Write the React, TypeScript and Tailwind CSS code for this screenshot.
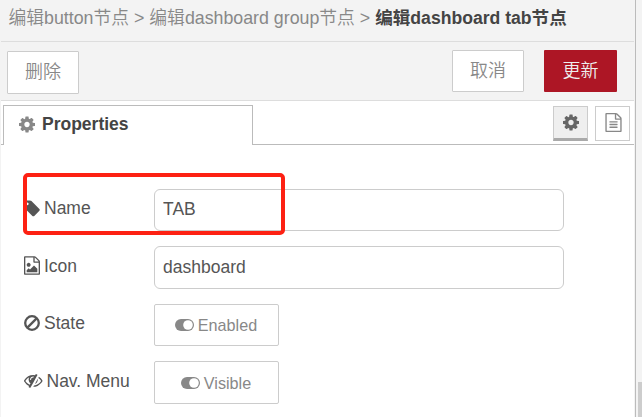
import type { ReactNode } from "react";

const paths = {
  cog: "M1152 896q0-106-75-181t-181-75-181 75-75 181 75 181 181 75 181-75 75-181zm512-109v222q0 12-8 23t-20 13l-185 28q-19 54-39 91 35 50 107 138 10 12 10 25t-9 23q-27 37-99 108t-94 71q-12 0-26-9l-138-108q-44 23-91 38-16 136-29 186-7 28-36 28h-222q-14 0-24.5-8.5t-11.5-21.5l-28-184q-49-16-90-37l-141 107q-10 9-25 9-14 0-25-11-126-114-165-168-7-10-7-23 0-12 8-23 15-21 51-66.5t54-70.5q-27-50-41-99l-183-27q-13-2-21-12.5t-8-23.5v-222q0-12 8-23t19-13l186-28q14-46 39-92-40-57-107-138-10-12-10-24 0-10 9-23 26-36 98.5-107.5t94.5-71.5q13 0 26 10l138 107q44-23 91-38 16-136 29-186 7-28 36-28h222q14 0 24.5 8.5t11.5 21.5l28 184q49 16 90 37l142-107q9-9 24-9 13 0 25 10 129 119 165 170 7 8 7 22 0 12-8 23-15 21-51 66.5t-54 70.5q26 50 41 98l183 28q13 2 21 12.5t8 23.5z",
  tag: "M576 448q0-53-37.5-90.5t-90.5-37.5-90.5 37.5-37.5 90.5 37.5 90.5 90.5 37.5 90.5-37.5 37.5-90.5zm1067 576q0 53-37 90l-491 492q-39 37-91 37-53 0-90-37l-715-716q-38-37-64.5-101t-26.5-117v-416q0-52 38-90t90-38h416q53 0 117 26.5t102 64.5l715 714q37 39 37 91z",
  fileText:
    "M1596 380q28 28 48 76t20 88v1152q0 40-28 68t-68 28h-1344q-40 0-68-28t-28-68v-1600q0-40 28-68t68-28h896q40 0 88 20t76 48zm-444-244v376h376q-10-29-22-41l-313-313q-12-12-41-22zm384 1528v-1024h-416q-40 0-68-28t-28-68v-416h-768v1536h1280zm-1024-864q0-14 9-23t23-9h704q14 0 23 9t9 23v64q0 14-9 23t-23 9h-704q-14 0-23-9t-9-23v-64zm736 224q14 0 23 9t9 23v64q0 14-9 23t-23 9h-704q-14 0-23-9t-9-23v-64q0-14 9-23t23-9h704zm0 256q14 0 23 9t9 23v64q0 14-9 23t-23 9h-704q-14 0-23-9t-9-23v-64q0-14 9-23t23-9h704z",
  fileImage:
    "M1596 380q28 28 48 76t20 88v1152q0 40-28 68t-68 28h-1344q-40 0-68-28t-28-68v-1600q0-40 28-68t68-28h896q40 0 88 20t76 48zm-444-244v376h376q-10-29-22-41l-313-313q-12-12-41-22zm384 1528v-1024h-416q-40 0-68-28t-28-68v-416h-768v1536h1280zm-128-448v320h-1024v-192l192-192 128 128 384-384zm-832-192q-80 0-136-56t-56-136 56-136 136-56 136 56 56 136-56 136-136 56z",
  eyeSlash:
    "M555 1335l78-141q-87-63-136-159t-49-203q0-121 61-225-229 117-381 353 167 258 427 375zm389-759q0-20-14-34t-34-14q-125 0-214.5 89.5t-89.5 214.5q0 20 14 34t34 14 34-14 14-34q0-86 61-147t147-61q20 0 34-14t14-34zm363-191q0 7-1 9-106 189-316 567t-315 566l-49 89q-10 16-28 16-12 0-134-70-16-10-16-28 0-12 44-87-143-65-263.5-173t-208.5-245q-20-31-20-69t20-69q153-235 380-371t496-136q89 0 180 17l54-97q10-16 28-16 5 0 18 6t31 15.5 33 18.5 31.5 18.5 19.5 11.5q16 10 16 27zm37 447q0 139-79 253.5t-209 164.5l280-502q8 45 8 84zm448 128q0 35-20 69-39 64-109 145-150 172-347.5 267t-419.5 95l74-132q212-18 392.5-137t301.5-307q-115-179-282-294l63-112q95 64 182.5 153t144.5 184q20 34 20 69z",
};

function Icon({ d, viewBox = "128 0 1536 1792", className }: { d: string; viewBox?: string; className: string }) {
  return (
    <svg viewBox={viewBox} className={`shrink-0 ${className}`} fill="currentColor">
      <path d={d} />
    </svg>
  );
}

function Ban() {
  return (
    <svg viewBox="0 0 16 16" className="size-4" fill="none" stroke="currentColor" strokeWidth="2.3">
      <circle cx="8" cy="8" r="6.8" />
      <path d="M3.4 12.6 12.6 3.4" />
    </svg>
  );
}

function Toggle() {
  return (
    <svg viewBox="0 0 19 12" className="h-3 w-[19px]">
      <rect width="19" height="12" rx="6" fill="currentColor" />
      <circle cx="13" cy="6" r="4.8" fill="white" />
    </svg>
  );
}

function Row({ icon, label, className, labelClass, children }: { icon: ReactNode; label: string; className: string; labelClass: string; children: ReactNode }) {
  return (
    <div className={`flex ${className}`}>
      <div className={`flex w-[130px] shrink-0 items-center gap-1 text-[#555] ${labelClass}`}>
        {icon}
        <span>{label}</span>
      </div>
      {children}
    </div>
  );
}

const field = "w-[410px] rounded-[6px] border border-[#ccc] bg-white px-2 pb-px text-[#555] outline-none";
const toggle = "flex w-[125px] items-center justify-center gap-1 rounded-[2px] border border-[#ccc] bg-white pr-px text-[16.2px] text-[#888]";

export default function App() {
  return (
    <div className="relative flex h-[417px] w-[642px] overflow-hidden bg-white font-['Liberation_Sans','Noto_Sans_CJK_SC',sans-serif] text-[17.5px] leading-6">
      <main className="flex w-[634px] shrink-0 flex-col border-l border-[#f3f3f3]">
        <header className="flex h-[42px] shrink-0 items-center border-b border-[#ddd] bg-[#f3f3f3] pb-[5px] pl-[7.5px] whitespace-pre text-[#888]">
          <span className="text-[17.8px] font-[350]">编辑button节点 &gt; 编辑dashboard group节点 &gt; </span>
          <span className="text-[17.6px] font-bold text-[#444]">编辑dashboard tab节点</span>
        </header>
        <div className="flex h-[59px] shrink-0 items-start border-b border-[#ddd] bg-[#f3f3f3] pt-2 pr-[17px] pl-1.5 text-[18px] font-[350]">
          <button className="mt-px h-[43px] w-[72px] rounded-[1px] border border-[#ccc] bg-white pb-px text-[#888]">删除</button>
          <button className="ml-auto h-[42px] w-[72px] rounded-[1px] border border-[#ccc] bg-white pb-px text-[#888]">取消</button>
          <button className="ml-5 h-[42px] w-[73px] rounded-[1px] bg-[#ad1625] pb-px text-[#eee]">更新</button>
        </div>
        <div className="flex h-11 shrink-0 items-end">
          <div className="h-px w-0.5 bg-[#bbb]" />
          <div className="flex h-10 w-[250px] items-center gap-[7px] border-x border-t border-[#bbb] pb-[3px] pl-[15px] font-bold text-[#444]">
            <Icon d={paths.cog} className="h-[19px] w-4 text-[#888]" />
            <span>Properties</span>
          </div>
          <div className="flex h-10 flex-1 justify-end gap-[7px] border-b border-[#bbb] pt-px pr-1">
            <button className="flex size-[35px] items-center justify-center border border-b-[3px] border-[#ccc] border-b-[#aaa] bg-[#efefef] text-[#666]">
              <Icon d={paths.cog} className="h-[19px] w-4" />
            </button>
            <button className="flex size-[35px] items-center justify-center border border-[#ccc] pb-0.5 pl-px text-[#888]">
              <Icon d={paths.fileText} className="h-[19px] w-[17px]" />
            </button>
          </div>
        </div>
        <form className="flex flex-col pt-11 pl-[23px]">
          <Row className="h-[57px]" labelClass="h-[38px]" label="Name" icon={<Icon d={paths.tag} className="h-[19px] w-4" />}>
            <input className={`h-[42px] ${field}`} defaultValue="TAB" />
          </Row>
          <Row className="h-[58px]" labelClass="h-[39px]" label="Icon" icon={<Icon d={paths.fileImage} className="h-[19px] w-4" />}>
            <input className={`h-[43px] ${field}`} defaultValue="dashboard" />
          </Row>
          <Row className="h-[57px]" labelClass="h-[38px]" label="State" icon={<Ban />}>
            <button type="button" className={`h-[42px] ${toggle}`}>
              <Toggle />
              Enabled
            </button>
          </Row>
          <Row className="h-[56px]" labelClass="h-[39px]" label="Nav. Menu" icon={<Icon d={paths.eyeSlash} viewBox="0 0 1792 1792" className="size-[18.5px]" />}>
            <button type="button" className={`h-[43px] ${toggle}`}>
              <Toggle />
              Visible
            </button>
          </Row>
        </form>
      </main>
      <aside className="flex flex-1 flex-col items-end justify-end border-l border-[#f3f3f3] bg-[#f3f3f3] shadow-[inset_1px_0_0_#bbb]">
        <div className="h-[35px] w-1 bg-[#cdcdcd]" />
      </aside>
      <div className="pointer-events-none absolute top-[173px] left-[23px] h-[62px] w-[262px] rounded-[5px] border-4 border-[#fd2113]" />
    </div>
  );
}
